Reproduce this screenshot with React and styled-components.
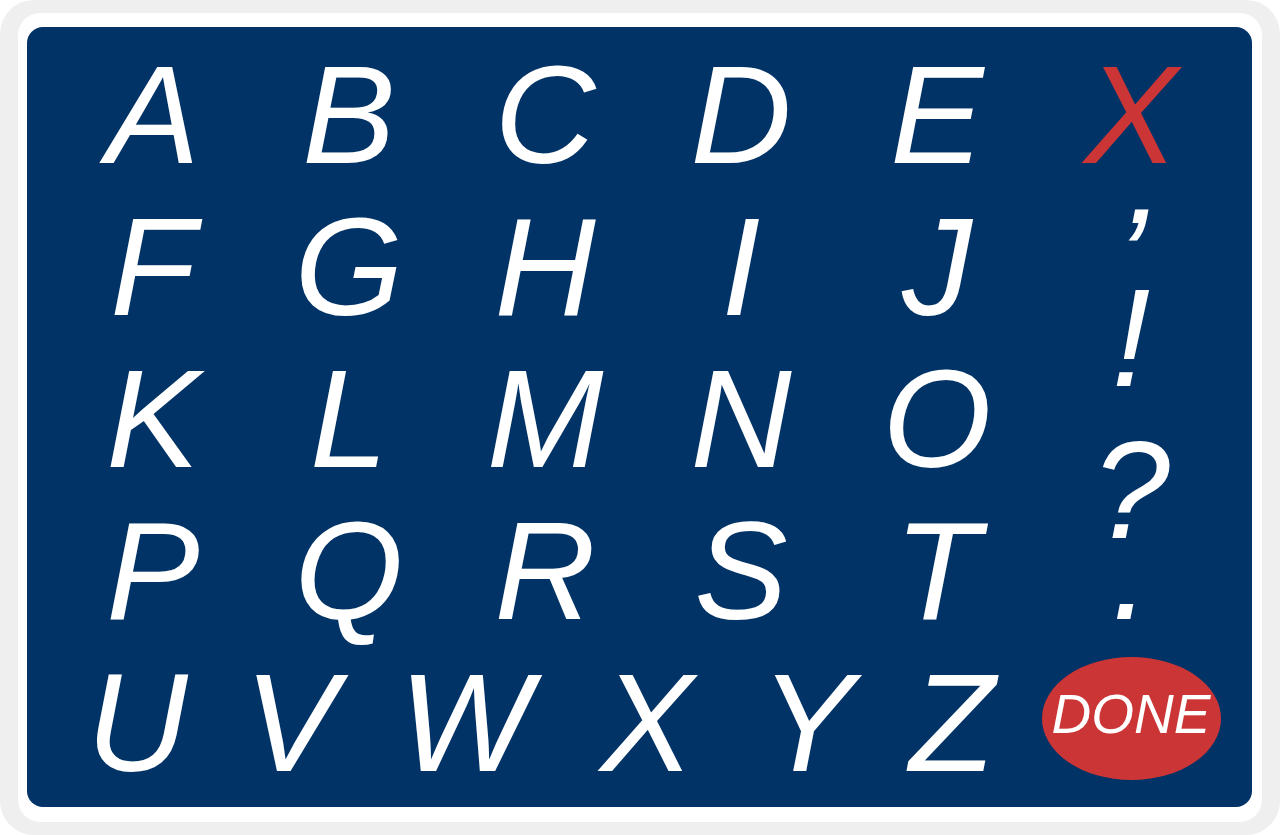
import React from 'react';
import styled, { createGlobalStyle } from 'styled-components';

const colors = {
  navy: '#023366',
  red: '#cc3535',
  frame: '#efefef',
  white: '#ffffff',
};

const GlobalStyle = createGlobalStyle`
  html, body {
    margin: 0;
    padding: 0;
    background: ${colors.white};
  }
  * {
    box-sizing: border-box;
  }
`;

const Frame = styled.div`
  width: 1280px;
  height: 835px;
  background: ${colors.frame};
  border-radius: 34px;
  padding: 13px 18px 13px 18px;
  display: flex;
`;

const Card = styled.div`
  flex: 1;
  background: ${colors.white};
  border-radius: 22px;
  padding: 14px 10px 15px 9px;
  display: flex;
`;

const Board = styled.div`
  flex: 1;
  background: ${colors.navy};
  border-radius: 16px;
  padding: 12px 0 0 28px;
  display: flex;
  font-family: "Liberation Sans", Arial, sans-serif;
  font-style: italic;
  color: ${colors.white};
`;

const Letters = styled.div`
  width: 980px;
  display: flex;
  flex-direction: column;
`;

const Grid = styled.div`
  display: grid;
  grid-template-columns: repeat(5, 196px);
  grid-auto-rows: 152px;
`;

// the bottom row has six letters, spaced apart on its own
const LastRow = styled.div`
  display: grid;
  grid-template-columns: 164px 144px 204px 160px 160px 130px;
  height: 152px;
`;

const Key = styled.div`
  display: flex;
  justify-content: center;
  font-size: 140px;
  line-height: 152px;
  height: 152px;
  color: ${(p) => (p.$red ? colors.red : colors.white)};
  white-space: nowrap;
`;

const Side = styled.div`
  width: 192px;
  display: flex;
  flex-direction: column;
  align-items: center;
`;

const Punct = styled.div`
  margin-top: ${(p) => p.$mt}px;
  font-size: 140px;
  line-height: 81px;
  height: 162px;
  text-align: center;
  white-space: pre-line;
`;

const Done = styled.div`
  margin-top: 46px;
  width: 179px;
  height: 123px;
  border-radius: 50%;
  background: ${colors.red};
  display: flex;
  align-items: center;
  justify-content: center;
  padding-bottom: 8px;
  font-size: 55px;
  line-height: 55px;
  color: ${colors.white};
`;

const rows = ['ABCDE', 'FGHIJ', 'KLMNO', 'PQRST'];
const lastRow = 'UVWXYZ';

const App = () => {
  return (
    <>
      <GlobalStyle />
      <Frame>
        <Card>
          <Board>
            <Letters>
              <Grid>
                {rows.join('').split('').map((ch) => (
                  <Key key={ch}>{ch}</Key>
                ))}
              </Grid>
              <LastRow>
                {lastRow.split('').map((ch) => (
                  <Key key={ch}>{ch}</Key>
                ))}
              </LastRow>
            </Letters>
            <Side>
              <Key $red>X</Key>
              <Punct $mt={25}>{'’\n!'}</Punct>
              <Punct $mt={71}>{'?\n.'}</Punct>
              <Done>DONE</Done>
            </Side>
          </Board>
        </Card>
      </Frame>
    </>
  );
};

export default App;
